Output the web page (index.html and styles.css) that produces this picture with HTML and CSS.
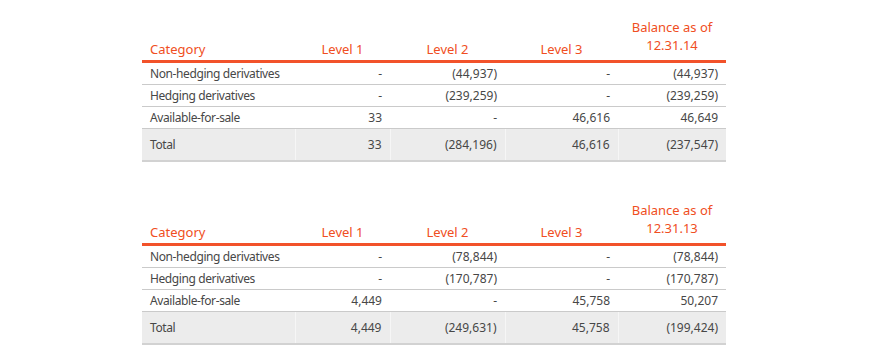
FILE: index.html
```html
<!DOCTYPE html>
<html>
<head>
<meta charset="utf-8">
<link rel="stylesheet" href="styles.css">
</head>
<body>
<div class="page">
  <table class="fin">
    <colgroup><col class="c1"><col class="c2"><col class="c3"><col class="c4"><col class="c5"></colgroup>
    <thead>
      <tr><th class="cat">Category</th><th>Level 1</th><th>Level 2</th><th>Level 3</th><th class="bal"><span class="ln">Balance as of</span><span class="ln">12.31.14</span></th></tr>
    </thead>
    <tbody>
      <tr><td>Non-hedging derivatives</td><td>-</td><td>(44,937)</td><td>-</td><td>(44,937)</td></tr>
      <tr><td>Hedging derivatives</td><td>-</td><td>(239,259)</td><td>-</td><td>(239,259)</td></tr>
      <tr><td>Available-for-sale</td><td>33</td><td>-</td><td>46,616</td><td>46,649</td></tr>
      <tr class="total"><td>Total</td><td>33</td><td>(284,196)</td><td>46,616</td><td>(237,547)</td></tr>
    </tbody>
  </table>
  <table class="fin">
    <colgroup><col class="c1"><col class="c2"><col class="c3"><col class="c4"><col class="c5"></colgroup>
    <thead>
      <tr><th class="cat">Category</th><th>Level 1</th><th>Level 2</th><th>Level 3</th><th class="bal"><span class="ln">Balance as of</span><span class="ln">12.31.13</span></th></tr>
    </thead>
    <tbody>
      <tr><td>Non-hedging derivatives</td><td>-</td><td>(78,844)</td><td>-</td><td>(78,844)</td></tr>
      <tr><td>Hedging derivatives</td><td>-</td><td>(170,787)</td><td>-</td><td>(170,787)</td></tr>
      <tr><td>Available-for-sale</td><td>4,449</td><td>-</td><td>45,758</td><td>50,207</td></tr>
      <tr class="total"><td>Total</td><td>4,449</td><td>(249,631)</td><td>45,758</td><td>(199,424)</td></tr>
    </tbody>
  </table>
</div>
</body>
</html>
```
FILE: styles.css
```css
html, body { margin: 0; padding: 0; background: #fff; }
.page {
  padding: 18px 0 0 142px;
  display: flex;
  flex-direction: column;
  gap: 39px;
}
.fin {
  width: 584px;
  table-layout: fixed;
  border-collapse: collapse;
  font-family: "Noto Sans", "Open Sans", sans-serif;
  font-size: 12px;
  color: #474747;
}
.c1 { width: 153px; }
.c2 { width: 95px; }
.c3 { width: 115px; }
.c4 { width: 113px; }
.c5 { width: 108px; }
.fin th {
  font-weight: normal;
  font-size: 13px;
  line-height: 16px;
  color: #f04e22;
  text-align: center;
  vertical-align: bottom;
  padding: 0 0 3px;
  border-bottom: 3px solid #f2522a;
}
.fin th.cat { text-align: left; padding-left: 8px; }
.fin th.bal { padding-bottom: 6px; }
.fin th .ln { display: block; line-height: 18px; }
.fin td {
  height: 21px;
  padding: 0 8px;
  text-align: right;
  vertical-align: middle;
  line-height: 16px;
  border-bottom: 1px solid #cacaca;
  white-space: nowrap;
}
.fin td:first-child { text-align: left; letter-spacing: -0.4px; }
.fin tr.total td {
  height: 31px;
  background: #ececec;
  border-bottom: 2px solid #d2d2d2;
}
.fin tr.total td + td { border-left: 1px solid #f6f6f6; }
```
